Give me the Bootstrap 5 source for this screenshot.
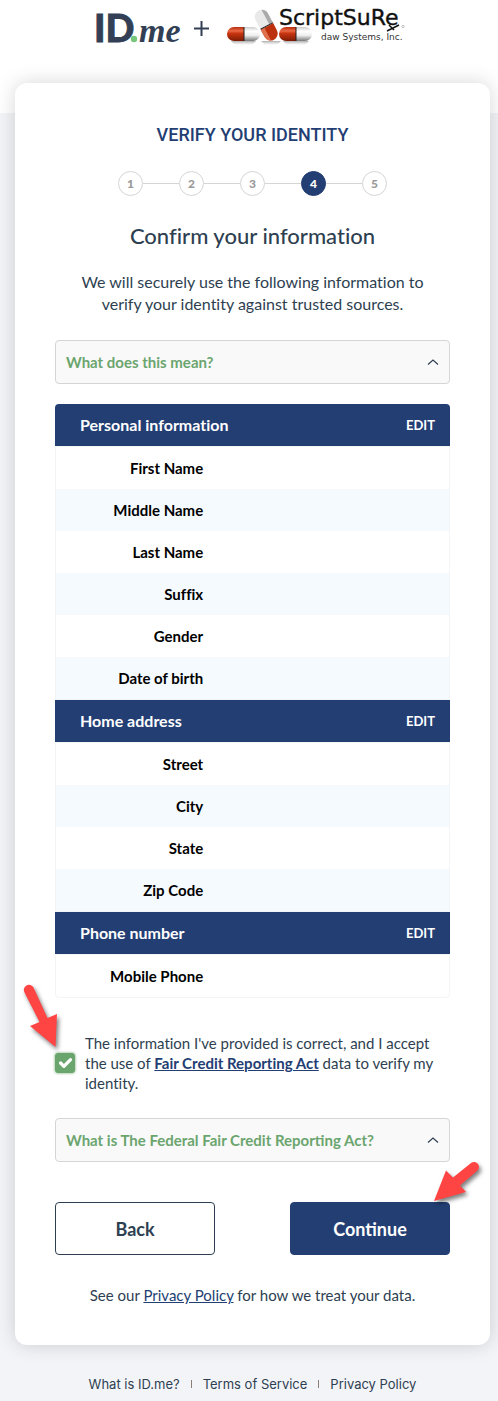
<!DOCTYPE html>
<html lang="en">
<head>
<meta charset="utf-8">
<meta name="viewport" content="width=device-width, initial-scale=1">
<title>Verify your identity</title>
<link rel="stylesheet" href="https://cdn.jsdelivr.net/npm/bootstrap@5.3.0/dist/css/bootstrap.min.css">
<style>
  :root { --navy: #233e73; --ink: #2e3f51; --green: #6ba56e; --red: #ff4444; }
  body { min-height: 100vh; font-family: Lato, "Liberation Sans", sans-serif; font-size: 16px; line-height: 22px; font-variant-ligatures: none; color: var(--ink); background: linear-gradient(#fff 113px, #f3f4f8 113px); }
  a { color: var(--navy); }
  .brand-bar { height: 83px; padding: 0 8px 0 15px; }
  .brand-bar svg { display: block; overflow: visible; }
  .verify-card { margin: 0 8px 0 15px; padding: 40px; background: #fff; border-radius: 12px; box-shadow: 0 0 20px rgba(0,0,0,.16); }
  .flow-name { font: 500 18px/24px Roboto, sans-serif; color: var(--navy); margin-bottom: 24px; }
  .steps { margin: 0 0 28px; padding: 0; list-style: none; }
  .steps li { display: flex; align-items: center; }
  .steps li + li::before { content: ""; width: 36px; border-top: 1px solid #d5d5d5; }
  .step-dot { width: 25px; height: 25px; border: 1px solid #d5d5d5; border-radius: 50%; font-size: 12px; font-weight: 900; line-height: 23px; color: #999; text-align: center; }
  .step-dot.now { background: var(--navy); border-color: var(--navy); color: #fff; }
  .page-title { font-size: 22px; line-height: 24px; margin-bottom: 23px; }
  .intro { padding: 0 20px; margin-bottom: 25px; }
  .ask { height: 44px; padding: 0 10px; border: 1px solid #d5d5d5; border-radius: 4px; background: #f9f9f9; color: var(--green); font-size: 15px; font-weight: 700; text-align: left; }
  .details { margin-top: 20px; }
  .group-head { height: 42px; padding: 0 15px 0 25px; background: var(--navy); color: #fff; }
  .group-head h2 { font-size: 16px; font-weight: 700; margin: 0; }
  .group-head button { font-size: 13px; font-weight: 700; color: #fff; background: none; border: 0; padding: 0; }
  .details > section:first-child .group-head { border-radius: 4px 4px 0 0; }
  .group-body { border: 1px solid #f3f4f6; }
  .details > section:last-child .group-body { border-radius: 0 0 4px 4px; }
  .group-body table { width: 100%; table-layout: fixed; }
  .group-body th { width: 40%; height: 42px; padding: 0 10px 0 0; text-align: right; font-size: 15px; font-weight: 700; color: #000; }
  .group-body tr:nth-child(even) { background: #f5faff; }
  .agree { gap: 10px; font-size: 15px; line-height: 20px; margin: 35px 0 25px; }
  .agree .form-check-input { width: 20px; height: 20px; margin: 0; border-radius: 3px; }
  .agree .form-check-input:checked { background-color: var(--green); border-color: var(--green); background-size: 22px; box-shadow: 0 0 3px var(--green); }
  .agree a { font-weight: 700; }
  .pointer { position: absolute; overflow: visible; pointer-events: none; fill: var(--red); filter: drop-shadow(2px 3px 2px rgba(0,0,0,.5)); }
  .pointer-check { right: 17px; bottom: 25px; }
  .pointer-next { right: -30px; bottom: 53px; }
  .actions { margin-top: 40px; }
  .act { width: 160px; height: 53px; border-radius: 4px; border: 1px solid var(--ink); color: var(--ink); font-size: 18px; font-weight: 700; }
  .act-next { background: var(--navy); border-color: var(--navy); color: #fff; }
  .policy { font-size: 15px; line-height: 20px; margin: 30px 0 0; }
  .foot { font-family: Inter, sans-serif; font-size: 13px; line-height: 20px; padding: 29px 8px 7px 15px; gap: 11px; }
  .foot a { color: var(--ink); text-decoration: none; }
  .foot i { width: 1px; height: 8px; background: #8a7f78; }
</style>
</head>
<body>
<header class="brand-bar d-flex justify-content-center">
  <svg width="313" height="50" viewBox="96 0 313 50" role="img" aria-label="ID.me + ScriptSure">
    <defs>
      <linearGradient id="redCap" x1="0" y1="0" x2="0" y2="1"><stop offset="0" stop-color="#b82c0c"/><stop offset=".28" stop-color="#ea6a46"/><stop offset=".45" stop-color="#c93510"/><stop offset="1" stop-color="#7c1b05"/></linearGradient>
      <linearGradient id="whiteCap" x1="0" y1="0" x2="0" y2="1"><stop offset="0" stop-color="#ccc"/><stop offset=".3" stop-color="#fff"/><stop offset=".6" stop-color="#eee"/><stop offset="1" stop-color="#777"/></linearGradient>
      <linearGradient id="fade" x1="0" y1="0" x2="0" y2="1"><stop offset="0" stop-color="#777" stop-opacity=".6"/><stop offset="1" stop-color="#aaa" stop-opacity="0"/></linearGradient>
      <g id="pill">
        <path d="M17 0H7a7 7 0 0 0 0 14h10z" fill="url(#redCap)"/>
        <path d="M17 0h9a7 7 0 0 1 0 14h-9z" fill="url(#whiteCap)"/>
        <path d="M17 0v14" stroke="#222" stroke-width="1"/>
      </g>
      <g id="pillUp">
        <path d="M-7 1V9a7 7 0 0 0 14 0V1z" fill="#bd300d"/>
        <path d="M-7 1V9a7 7 0 0 0 4 6.300V1z" fill="#e0714f"/>
        <path d="M-7 0V-10a7 7 0 0 1 14 0V0z" fill="#e9e9e9"/>
        <path d="M3 0V-16.300a7 7 0 0 1 4 6.300V0z" fill="#aaa"/>
        <path d="M-7 .5H7" stroke="#222"/>
      </g>
    </defs>
    <text x="94" y="42" font-family="Lato, sans-serif" font-weight="900" font-size="38" fill="#323f54" stroke="#323f54" stroke-width=".8">ID</text>
    <circle cx="134" cy="39" r="3.200" fill="#76c77b"/>
    <text x="139" y="42" font-family="'Liberation Serif', serif" font-style="italic" font-weight="700" font-size="34" fill="#323f54">me</text>
    <path d="M194 28.500h15M201.500 21v15" stroke="#323f54" stroke-width="2"/>
    <path d="M231 41h25l-4 4h-17zM261 41h20l-4 4h-12zM283 41h26l-4 4h-18z" fill="url(#fade)"/>
    <use href="#pill" x="227" y="27"/>
    <use href="#pillUp" transform="translate(266.500 25.500) rotate(-28)"/>
    <use href="#pill" x="279" y="27"/>
    <text x="279" y="25" font-family="'DejaVu Sans', sans-serif" font-size="22" fill="#111" stroke="#111" stroke-width=".4">ScriptSuRe</text>
    <path d="M387 31l12-6M389 25l5 5" stroke="#111" stroke-width="1.500"/>
    <text x="321" y="40" font-family="'DejaVu Sans', sans-serif" font-size="9" fill="#333">daw Systems, Inc.</text>
    <circle cx="403" cy="26.500" r="1.200" fill="none" stroke="#999" stroke-width=".6"/>
  </svg>
</header>

<main class="verify-card">
  <div class="text-center">
    <div class="flow-name">VERIFY YOUR IDENTITY</div>
    <ol class="steps d-flex justify-content-center">
      <li><span class="step-dot">1</span></li>
      <li><span class="step-dot">2</span></li>
      <li><span class="step-dot">3</span></li>
      <li aria-current="step"><span class="step-dot now">4</span></li>
      <li><span class="step-dot">5</span></li>
    </ol>
    <h1 class="page-title">Confirm your information</h1>
    <p class="intro">We will securely use the following information to verify your identity against trusted sources.</p>
  </div>

  <button type="button" class="ask w-100 d-flex align-items-center justify-content-between">What does this mean?
    <svg width="12" height="6" viewBox="0 0 12 6" fill="none" stroke="#2e3f51" stroke-width="1.200"><path d="M1 5.500L6 1l5 4.500"/></svg>
  </button>

  <div class="details">
    <section>
      <div class="group-head d-flex align-items-center justify-content-between"><h2>Personal information</h2><button type="button">EDIT</button></div>
      <div class="group-body"><table>
        <tr><th scope="row">First Name</th><td></td></tr>
        <tr><th scope="row">Middle Name</th><td></td></tr>
        <tr><th scope="row">Last Name</th><td></td></tr>
        <tr><th scope="row">Suffix</th><td></td></tr>
        <tr><th scope="row">Gender</th><td></td></tr>
        <tr><th scope="row">Date of birth</th><td></td></tr>
      </table></div>
    </section>
    <section>
      <div class="group-head d-flex align-items-center justify-content-between"><h2>Home address</h2><button type="button">EDIT</button></div>
      <div class="group-body"><table>
        <tr><th scope="row">Street</th><td></td></tr>
        <tr><th scope="row">City</th><td></td></tr>
        <tr><th scope="row">State</th><td></td></tr>
        <tr><th scope="row">Zip Code</th><td></td></tr>
      </table></div>
    </section>
    <section>
      <div class="group-head d-flex align-items-center justify-content-between"><h2>Phone number</h2><button type="button">EDIT</button></div>
      <div class="group-body"><table>
        <tr><th scope="row">Mobile Phone</th><td></td></tr>
      </table></div>
    </section>
  </div>

  <div class="agree d-flex align-items-center">
    <div class="position-relative d-flex">
      <input class="form-check-input flex-shrink-0" type="checkbox" id="accept" checked>
      <svg class="pointer pointer-check" width="35" height="64" viewBox="23 984 35 64"><path d="M24.500 992.500a5 5 0 0 1 9-5L47.500 1018l9.500-4-1.500 33L30 1026l9.500-4z"/></svg>
    </div>
    <label for="accept">The information I've provided is correct, and I accept the use of <a href="#">Fair Credit Reporting Act</a> data to verify my identity.</label>
  </div>

  <button type="button" class="ask w-100 d-flex align-items-center justify-content-between">What is The Federal Fair Credit Reporting Act?
    <svg width="12" height="6" viewBox="0 0 12 6" fill="none" stroke="#2e3f51" stroke-width="1.200"><path d="M1 5.500L6 1l5 4.500"/></svg>
  </button>

  <div class="actions d-flex justify-content-between">
    <button type="button" class="act bg-white">Back</button>
    <div class="position-relative">
      <button type="submit" class="act act-next">Continue</button>
      <svg class="pointer pointer-next" width="46" height="40" viewBox="434 1162 46 40"><path d="M434 1201l12-30.500 7 7L471 1163a5 5 0 0 1 6 8l-17 14.500 6 6.500z"/></svg>
    </div>
  </div>
  <p class="policy text-center">See our <a href="#">Privacy Policy</a> for how we treat your data.</p>
</main>

<footer class="foot d-flex justify-content-center align-items-center">
  <a href="#">What is ID.me?</a><i></i><a href="#">Terms of Service</a><i></i><a href="#">Privacy Policy</a>
</footer>
<script src="https://cdn.jsdelivr.net/npm/bootstrap@5.3.0/dist/js/bootstrap.bundle.min.js"></script>
</body>
</html>
